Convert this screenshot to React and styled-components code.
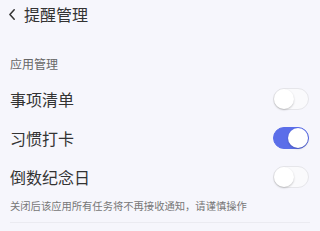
import React, { useState } from "react";
import styled, { createGlobalStyle } from "styled-components";

const Global = createGlobalStyle`
  html, body { margin: 0; padding: 0; background: #f6f6fc; }
  body { font-family: "Noto Sans CJK SC", "Noto Sans", sans-serif; }
  * { box-sizing: border-box; }
`;

const Page = styled.div`
  width: 320px;
  height: 231px;
  background: #f6f6fc;
  display: flex;
  flex-direction: column;
  overflow: hidden;
`;

const Header = styled.div`
  height: 28px;
  display: flex;
  align-items: center;
  padding-left: 9px;
  gap: 9px;
`;

const Back = styled.button`
  border: 0;
  background: none;
  padding: 0;
  width: 6px;
  height: 12px;
  display: flex;
  align-items: center;
  color: #333;
`;

const Title = styled.div`
  font-size: 16px;
  line-height: 20px;
  color: #333;
`;

const SectionLabel = styled.div`
  margin-top: 28px;
  padding-left: 10px;
  font-size: 12px;
  line-height: 16px;
  color: #666;
`;

const List = styled.div`
  margin-top: 7px;
  display: flex;
  flex-direction: column;
`;

const Row = styled.div`
  height: 39px;
  display: flex;
  align-items: center;
  justify-content: space-between;
  padding: 0 11px 0 10px;
`;

const RowLabel = styled.div`
  font-size: 16px;
  line-height: 20px;
  color: #333;
`;

const Track = styled.button`
  position: relative;
  width: 36px;
  height: 22px;
  border-radius: 11px;
  padding: 0;
  cursor: pointer;
  border: 1px solid ${(p) => (p.$on ? "#5b6ee9" : "#e6e6ea")};
  background: ${(p) => (p.$on ? "#5b6ee9" : "#fafafc")};
`;

const Knob = styled.span`
  position: absolute;
  top: 0;
  left: ${(p) => (p.$on ? "14px" : "0")};
  width: 20px;
  height: 20px;
  border-radius: 50%;
  background: #fff;
  box-shadow: 0 1px 2px rgba(0, 0, 0, 0.22);
`;

const Note = styled.div`
  margin-top: 3px;
  padding-left: 10px;
  font-size: 10.3px;
  line-height: 14px;
  color: #777;
`;

const Divider = styled.div`
  margin: 9px 10px 0;
  height: 1px;
  background: #ebebf1;
`;

function Toggle({ on, onClick }) {
  return (
    <Track $on={on} onClick={onClick} aria-pressed={on}>
      <Knob $on={on} />
    </Track>
  );
}

export default function App() {
  const [items, setItems] = useState([
    { label: "事项清单", on: false },
    { label: "习惯打卡", on: true },
    { label: "倒数纪念日", on: false },
  ]);
  const flip = (i) =>
    setItems((s) => s.map((it, j) => (j === i ? { ...it, on: !it.on } : it)));
  return (
    <Page>
      <Global />
      <Header>
        <Back aria-label="back">
          <svg width="6" height="11" viewBox="0 0 6 11">
            <polyline points="5.2,0.8 0.9,5.5 5.2,10.2" fill="none" stroke="#333" strokeWidth="1.5" strokeLinecap="round" strokeLinejoin="round" />
          </svg>
        </Back>
        <Title>提醒管理</Title>
      </Header>
      <SectionLabel>应用管理</SectionLabel>
      <List>
        {items.map((it, i) => (
          <Row key={it.label}>
            <RowLabel>{it.label}</RowLabel>
            <Toggle on={it.on} onClick={() => flip(i)} />
          </Row>
        ))}
      </List>
      <Note>关闭后该应用所有任务将不再接收通知，请谨慎操作</Note>
      <Divider />
    </Page>
  );
}
